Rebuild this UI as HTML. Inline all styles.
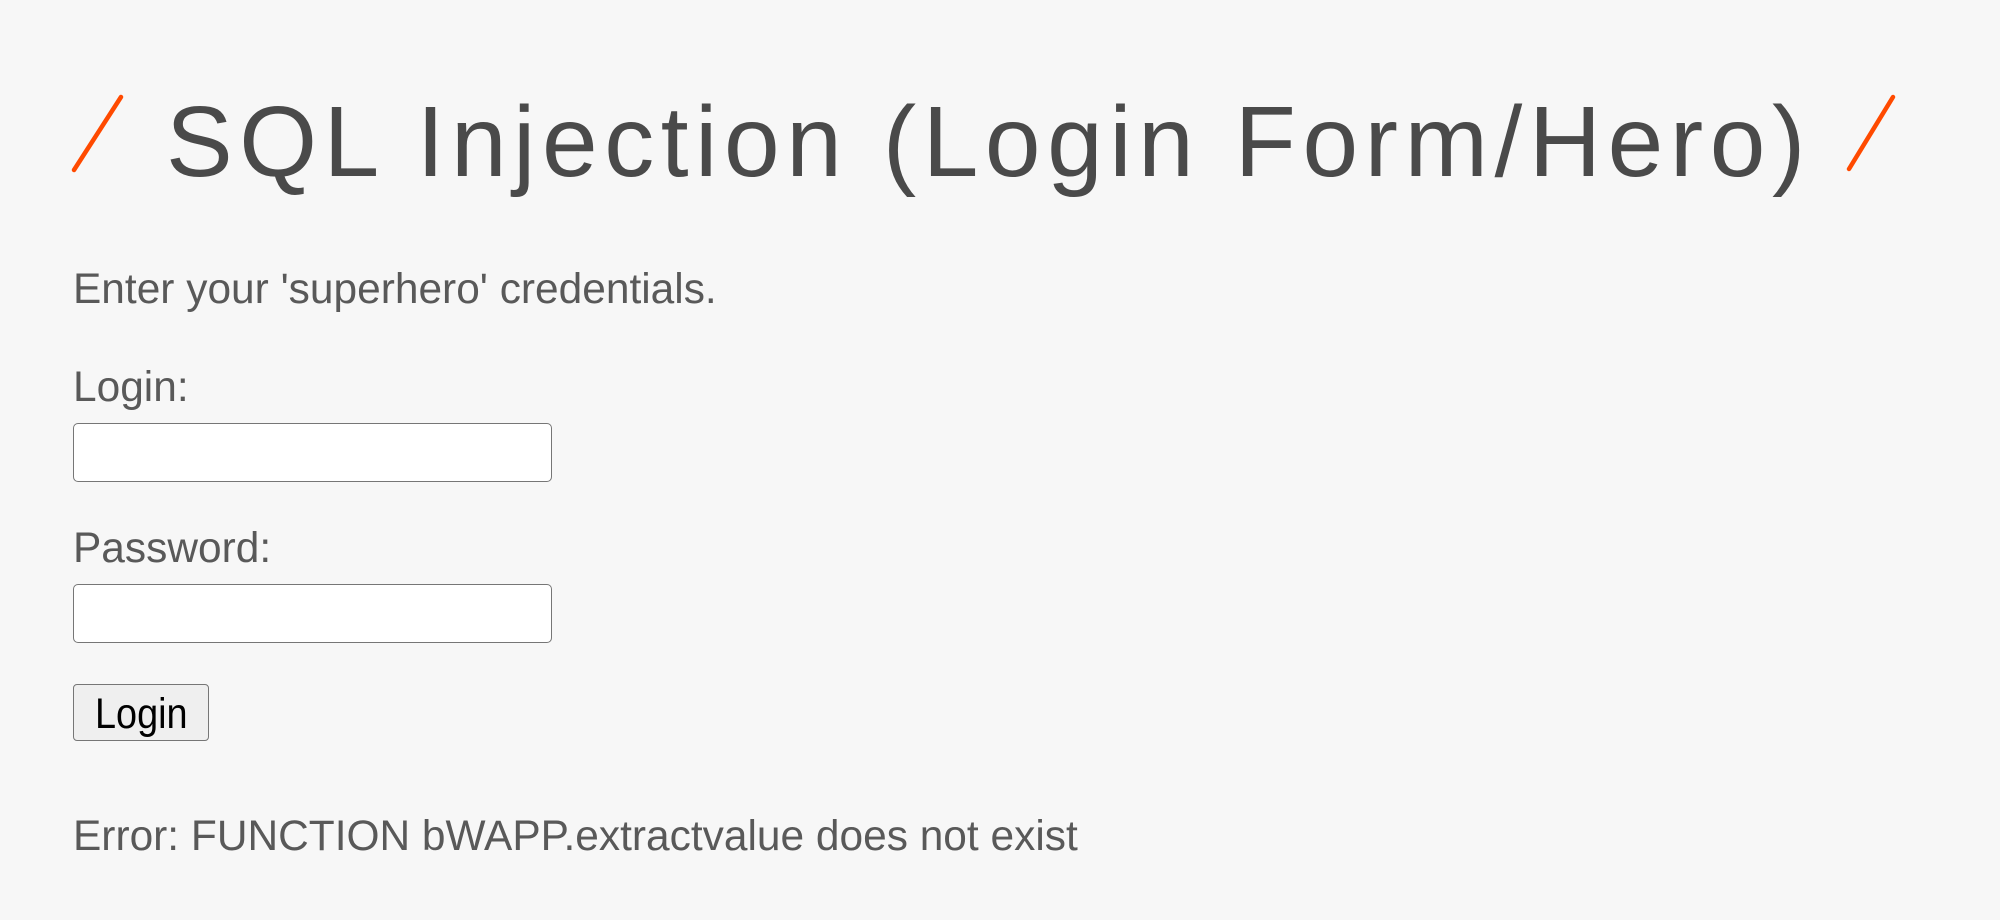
<!DOCTYPE html>
<html><head><meta charset="utf-8"><style>
html,body{margin:0;padding:0;width:2000px;height:920px;overflow:hidden;background:#f7f7f7;}
.t{position:absolute;font-family:"Liberation Sans",sans-serif;line-height:1;white-space:nowrap;}
.title{left:166px;top:92px;font-size:100px;color:#4a4a4a;letter-spacing:6.6px;}
.b{font-size:43px;color:#595959;transform:scaleX(0.987);transform-origin:0 0;left:73px;}
.in{position:absolute;left:73px;width:477px;height:57px;border:1px solid #767676;border-radius:5px;background:#fff;}
.btn{position:absolute;left:73px;top:684px;width:134px;height:55px;border:1px solid #767676;border-radius:4px;background:#efefef;}
</style></head><body>
<svg width="2000" height="920" style="position:absolute;left:0;top:0">
<path d="M121 97 L74 170" stroke="#ff4a00" stroke-width="4.5" stroke-linecap="round"/>
<path d="M1893 97 L1849 169" stroke="#ff4a00" stroke-width="4.5" stroke-linecap="round"/>
</svg>
<div class="t title">SQL Injection (Login Form/Hero)</div>
<div class="t b" style="top:268px">Enter your 'superhero' credentials.</div>
<div class="t b" style="top:366px">Login:</div>
<div class="in" style="top:423px"></div>
<div class="t b" style="top:527px">Password:</div>
<div class="in" style="top:584px"></div>
<div class="btn"></div>
<div class="t b" style="left:95px;top:693px;color:#000;transform:scaleX(0.88)">Login</div>
<div class="t b" style="top:815px">Error: FUNCTION bWAPP.extractvalue does not exist</div>
</body></html>
